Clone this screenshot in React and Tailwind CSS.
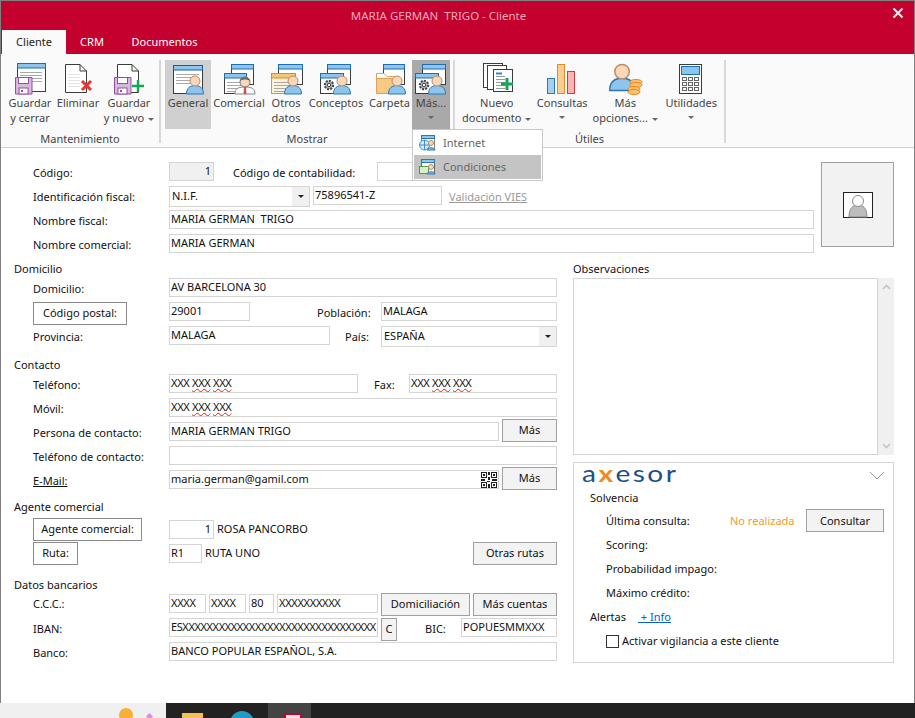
import React from "react";

const Caret = ({ className = "" }) => (
  <span className={"inline-block w-0 h-0 border-l-[3px] border-r-[3px] border-t-[3px] border-l-transparent border-r-transparent border-t-[#666] align-middle " + className} />
);

const Win = ({ x, y, w, h, head = "#8fc4ec", stroke = "#1f6fb0", body = "#fff", frame = "#3c3c3c", lines = true }) => (
  <g>
    <rect x={x + 0.5} y={y + 0.5} width={w} height={h} fill={body} stroke={frame} />
    <rect x={x + 0.5} y={y + 0.5} width={w} height={4.5} fill={head} stroke={stroke} />
    {lines && [9, 12, 15, 18].map((d) => (
      <line key={d} x1={x + 3} x2={x + w - 3} y1={y + d + 0.5} y2={y + d + 0.5} stroke="#a8a8a8" />
    ))}
  </g>
);

const Person = ({ x, y, s = 1 }) => (
  <g transform={`translate(${x} ${y}) scale(${s})`}>
    <path d="M0.5 19 C0.5 13 4 10.5 9 10.5 C14 10.5 17.5 13 17.5 19 Z" fill="#8fc4ec" stroke="#2a78b8" />
    <circle cx="9" cy="6" r="5" fill="#fbd7ba" stroke="#c08a62" />
  </g>
);

const Floppy = ({ x, y }) => (
  <g transform={`translate(${x} ${y})`}>
    <path d="M0.5 0.5 H17 V17 H0.5 Z" fill="#d9b8de" stroke="#92509f" />
    <rect x="3.5" y="0.5" width="10" height="6" fill="#fff" stroke="#92509f" />
    <rect x="4" y="11" width="9" height="6" fill="#fff" stroke="#92509f" />
    <rect x="6" y="13" width="2" height="2" fill="#92509f" />
  </g>
);

const Page = ({ x, y, w = 22, h = 29 }) => (
  <path d={`M${x + 0.5} ${y + 0.5} H${x + w - 7} L${x + w - 0.5} ${y + 7} V${y + h - 0.5} H${x + 0.5} Z M${x + w - 7} ${y + 0.5} V${y + 7} H${x + w - 0.5}`} fill="#fff" stroke="#3c3c3c" />
);

const Gear = ({ x, y }) => (
  <g transform={`translate(${x} ${y})`}>
    <circle cx="6" cy="6" r="4.2" fill="#b5b5b5" stroke="#444" strokeWidth="2" strokeDasharray="2 1.2" />
    <circle cx="6" cy="6" r="1.7" fill="#fff" stroke="#444" />
  </g>
);

const Svg = ({ children }) => (
  <svg width="36" height="35" viewBox="0 0 36 35" className="block shrink-0">{children}</svg>
);

const icons = {
  saveClose: (
    <Svg>
      <Win x={5} y={3} w={28} h={28} />
      <Floppy x={3} y={17} />
    </Svg>
  ),
  del: (
    <Svg>
      <Page x={5} y={4} />
      {[14, 17, 20, 23, 26].map((y) => (
        <line key={y} x1="8" x2="20" y1={y + 0.5} y2={y + 0.5} stroke="#e2e2e2" />
      ))}
      <path d="M22 21 L31 30 M31 21 L22 30" stroke="#e8352f" strokeWidth="3" />
    </Svg>
  ),
  saveNew: (
    <Svg>
      <Page x={6} y={4} />
      <Floppy x={3} y={17} />
      <path d="M27 20 V32 M21 26 H33" stroke="#14a651" strokeWidth="2.4" />
    </Svg>
  ),
  general: (
    <Svg>
      <Win x={3} y={5} w={29} h={28} stroke="#1b5f9e" />
      <Person x={16} y={15} />
    </Svg>
  ),
  comercial: (
    <Svg>
      <Win x={10} y={4} w={22} h={20} lines={false} />
      <Win x={3} y={13} w={22} h={20} />
      <path d="M14 34 C14 28 18 27 24 27 C30 27 34 28 34 34 Z" fill="#fff" stroke="#888" />
      <path d="M23 27 H25 L25.5 34 H22.5 Z" fill="#e24a4a" />
      <circle cx="24" cy="22" r="5" fill="#fbd7ba" stroke="#777" />
      <path d="M19 21 C19 16 29 16 29 21 C26 19 22 19 19 21 Z" fill="#666" />
    </Svg>
  ),
  otros: (
    <Svg>
      <Win x={10} y={4} w={24} h={20} lines={false} />
      <Win x={3} y={13} w={24} h={20} head="#f5c77e" stroke="#d98a2b" body="#fdf3dd" frame="#c99a55" />
      <Person x={16} y={15} />
    </Svg>
  ),
  conceptos: (
    <Svg>
      <Win x={9} y={4} w={23} h={20} lines={false} />
      <Win x={2} y={13} w={23} h={20} lines={false} />
      <Gear x={5} y={19} />
      <Person x={15} y={15} />
    </Svg>
  ),
  carpeta: (
    <Svg>
      <Win x={11} y={4} w={21} h={20} lines={false} />
      <path d="M4.5 13.5 H12 L15 16.5 H24 V32.5 H4.5 Z" fill="#fff" stroke="#e0a05a" />
      <path d="M4.5 18.5 H27 V33.5 H4.5 Z" fill="#f7c983" stroke="#e0a05a" />
      <Person x={16} y={15} />
    </Svg>
  ),
  nuevo: (
    <Svg>
      <rect x="4.5" y="3.5" width="19" height="24" fill="#fff" stroke="#3c3c3c" />
      <rect x="8.5" y="5.5" width="19" height="24" fill="#fff" stroke="#3c3c3c" />
      <rect x="14.5" y="9.5" width="19" height="22" fill="#fff" stroke="#3c3c3c" />
      <path d="M17 13.5 H23" stroke="#2a88cf" strokeWidth="2" />
      {[16, 19, 22, 25, 28].map((y) => (
        <line key={y} x1="17" x2="26" y1={y + 0.5} y2={y + 0.5} stroke="#9a9a9a" />
      ))}
      <path d="M28 18 V30 M22 24 H34" stroke="#14a651" strokeWidth="3" />
    </Svg>
  ),
  consultas: (
    <Svg>
      <rect x="3.5" y="18.5" width="7" height="15" fill="#a4d0f0" stroke="#2a78b8" />
      <rect x="13.5" y="4.5" width="7" height="29" fill="#f8cf8e" stroke="#e58a2b" />
      <rect x="23.5" y="11.5" width="7" height="22" fill="#f4b6b6" stroke="#d6393f" />
    </Svg>
  ),
  opciones: (
    <Svg>
      <Person x={2} y={3} s={1.45} />
      <g fill="#f9c06a" stroke="#e58a2b">
        <ellipse cx="29" cy="22" rx="6" ry="2.6" />
        <ellipse cx="29" cy="25" rx="6" ry="2.6" />
        <ellipse cx="27" cy="29" rx="6" ry="2.6" />
        <ellipse cx="27" cy="32" rx="6" ry="2.6" />
      </g>
    </Svg>
  ),
  util: (
    <Svg>
      <rect x="6.5" y="4.5" width="22" height="29" fill="#fff" stroke="#3c3c3c" />
      <rect x="8.5" y="6.5" width="18" height="8" fill="#8fc4ec" stroke="#1b6fb4" />
      {[17.5, 22.5, 27.5].map((y) =>
        [9.5, 15.5, 21.5].map((x) => (
          <rect key={x + "-" + y} x={x} y={y} width="4" height="3" fill="#fff" stroke="#666" />
        ))
      )}
    </Svg>
  ),
};
icons.mas = icons.conceptos;

const RibbonBtn = ({ w, icon, l1, l2, caret, caretAlone, bg = "" }) => (
  <div className={`flex flex-col items-center h-[69px] text-[11px] leading-[15px] text-[#444] ${w} ${bg}`}>
    {icons[icon]}
    <span className="whitespace-nowrap">{l1}</span>
    {l2 && (
      <span className="whitespace-nowrap">
        {l2}
        {caret && <Caret className="ml-[4px]" />}
      </span>
    )}
    {caretAlone && <Caret className="mt-[6px]" />}
  </div>
);

const RibbonGroup = ({ label, w, children, pl = "" }) => (
  <div className={`flex flex-col h-full shrink-0 border-r-2 border-[#d8d8d8] ${w}`}>
    <div className={`flex ${pl}`}>{children}</div>
    <div className="text-center text-[11px] leading-[15px] text-[#444] mt-[2px]">{label}</div>
  </div>
);

const Field = ({ w, children, right, gray, extra = "", ml = "" }) => (
  <div className={`h-[19px] mt-[2px] border border-[#d5d5d5] pl-[1px] pr-[2px] text-[11px] leading-[15px] text-[#111] whitespace-nowrap overflow-hidden shrink-0 ${right ? "text-right" : ""} ${gray ? "bg-[#f0f0f0]" : "bg-white"} ${w} ${ml} ${extra}`}>
    {children}
  </div>
);

const Select = ({ w, value, ml = "" }) => (
  <div className={`h-[21px] mt-[2px] border border-[#d5d5d5] flex items-center justify-between text-[11px] text-[#111] shrink-0 ${w} ${ml}`}>
    <span className="pl-[2px]">{value}</span>
    <span className="w-[17px] h-full bg-[#f0f0f0] flex items-center justify-center">
      <span className="w-0 h-0 border-l-[3px] border-r-[3px] border-t-[3px] border-l-transparent border-r-transparent border-t-[#222]" />
    </span>
  </div>
);

const Btn = ({ w, children, ml = "", mt = "mt-[-1px]", plain }) => (
  <div className={`h-[23px] border flex items-center justify-center text-[11px] text-[#111] whitespace-nowrap shrink-0 ${plain ? "bg-white border-[#8a8a8a]" : "bg-[#f3f3f3] border-[#a0a0a0]"} ${w} ${ml} ${mt}`}>
    {children}
  </div>
);

const Lbl = ({ w = "w-[136px]", ml = "ml-[19px]", children, cls = "text-[#111]", pt = "pt-[5px]" }) => (
  <div className={`h-[24px] text-[11px] leading-[16px] whitespace-nowrap shrink-0 ${pt} ${w} ${ml} ${cls}`}>{children}</div>
);

const Row = ({ children }) => <div className="flex items-start h-[24px]">{children}</div>;

const Header = ({ h, pt, children }) => (
  <div className={`text-[11px] leading-[16px] text-[#111] ${h} ${pt}`}>{children}</div>
);

const Squiggle = ({ children }) => (
  <span className="underline decoration-wavy decoration-[#e02020] decoration-1 underline-offset-1">{children}</span>
);

const Phone = () => (
  <span className="tracking-[-0.3px]">
    XXX <Squiggle>XXX</Squiggle> <Squiggle>XXX</Squiggle>
  </span>
);

const Qr = () => (
  <svg width="16" height="16" viewBox="0 0 16 16" className="absolute right-[1px] top-[1px]">
    <g fill="none" stroke="#222" strokeWidth="1">
      <rect x="0.5" y="0.5" width="5" height="5" />
      <rect x="10.5" y="0.5" width="5" height="5" />
      <rect x="0.5" y="10.5" width="5" height="5" />
      <rect x="10.5" y="10.5" width="5" height="5" />
    </g>
    <path d="M2 2h2v2H2z M12 2h2v2h-2z M2 12h2v2H2z M12 12h2v2h-2z M7 0h2v3H7z M7 5h2v3H7z M0 7h4v2H0z M6 9h3v1H6z M11 7h5v2h-5z M7 12h2v4H7z" fill="#222" />
  </svg>
);

export default function App() {
  return (
    <div className="w-[915px] h-[718px] relative overflow-hidden flex flex-col bg-white font-['Noto_Sans',sans-serif]">
      <div className="flex-1 flex flex-col border-x border-t border-[#808080] min-h-0">
        {/* Title bar */}
        <div className="h-[53px] bg-[#c4002f] relative shrink-0">
          <div className="text-center text-[11.5px] text-[#eba9b9] pt-[7px] pr-[38px] leading-[16px]">MARIA GERMAN&nbsp; TRIGO - Cliente</div>
          <svg width="12" height="12" viewBox="0 0 12 12" className="absolute right-[10px] top-[6px]">
            <path d="M1.5 1.5 L10.5 10.5 M10.5 1.5 L1.5 10.5" stroke="#f2f2f2" strokeWidth="2" />
          </svg>
          <div className="absolute left-[1px] bottom-0 flex h-[24px] text-[11px] leading-[24px] text-white">
            <div className="w-[64px] bg-[#fafafa] text-[#222] text-center">Cliente</div>
            <div className="w-[52px] text-center">CRM</div>
            <div className="ml-[6px] w-[81px] text-center">Documentos</div>
          </div>
        </div>

        {/* Ribbon */}
        <div className="h-[94px] shrink-0 bg-[#fafafa] border-b border-[#d0d0d0] flex items-stretch pt-[6px] pb-[4px]">
          <RibbonGroup label="Mantenimiento" w="w-[160px]" pl="pl-[5px]">
            <RibbonBtn w="w-[48px]" icon="saveClose" l1="Guardar" l2="y cerrar" />
            <RibbonBtn w="w-[48px]" icon="del" l1="Eliminar" />
            <RibbonBtn w="w-[54px]" icon="saveNew" l1="Guardar" l2="y nuevo" caret />
          </RibbonGroup>
          <RibbonGroup label="Mostrar" w="w-[294px]" pl="pl-[4px]">
            <RibbonBtn w="w-[46px]" icon="general" l1="General" bg="bg-[#d0d0d0]" />
            <RibbonBtn w="w-[56px]" icon="comercial" l1="Comercial" />
            <RibbonBtn w="w-[38px]" icon="otros" l1="Otros" l2="datos" />
            <RibbonBtn w="w-[62px]" icon="conceptos" l1="Conceptos" />
            <RibbonBtn w="w-[45px]" icon="carpeta" l1="Carpeta" />
            <RibbonBtn w="w-[38px]" icon="mas" l1="Más..." caretAlone bg="bg-[#a9a9a9]" />
          </RibbonGroup>
          <RibbonGroup label="Útiles" w="w-[271px]" pl="pl-[6px]">
            <RibbonBtn w="w-[72px]" icon="nuevo" l1="Nuevo" l2="documento" caret />
            <RibbonBtn w="w-[60px]" icon="consultas" l1="Consultas" caretAlone />
            <RibbonBtn w="w-[67px]" icon="opciones" l1="Más" l2="opciones..." caret />
            <RibbonBtn w="w-[66px]" icon="util" l1="Utilidades" caretAlone />
          </RibbonGroup>
        </div>

        {/* Form */}
        <div className="flex-1 bg-white pl-[13px] pt-[12px] min-h-0">
          <div className="flex">
            <div className="w-[800px] shrink-0">
              <Row>
                <Lbl>Código:</Lbl>
                <Field w="w-[45px]" right gray>1</Field>
                <Lbl w="w-[144px]">Código de contabilidad:</Lbl>
                <Field w="w-[65px]"> </Field>
              </Row>
              <Row>
                <Lbl>Identificación fiscal:</Lbl>
                <Select w="w-[141px]" value="N.I.F." />
                <Field w="w-[129px]" ml="ml-[3px]">75896541-Z</Field>
                <Lbl w="w-[80px]" ml="ml-[7px]" cls="text-[#9a9a9a] underline">Validación VIES</Lbl>
              </Row>
              <Row>
                <Lbl>Nombre fiscal:</Lbl>
                <Field w="w-[645px]">MARIA GERMAN&nbsp; TRIGO</Field>
              </Row>
              <Row>
                <Lbl>Nombre comercial:</Lbl>
                <Field w="w-[645px]">MARIA GERMAN</Field>
              </Row>
            </div>
            <div className="ml-[7px] mt-[2px] w-[73px] h-[85px] bg-[#f2f2f2] border border-[#a0a0a0] flex items-center justify-center">
              <svg width="30" height="26" viewBox="0 0 30 26">
                <rect x="0.5" y="0.5" width="29" height="25" fill="#fff" stroke="#222" />
                <path d="M6 25 C6 16 10 13 15 13 C20 13 24 16 24 25 Z" fill="#bdbdbd" stroke="#8a8a8a" />
                <circle cx="15" cy="9" r="5.5" fill="#fff" stroke="#8a8a8a" />
              </svg>
            </div>
          </div>

          <div className="flex">
            <div className="w-[544px] shrink-0">
              <Header h="h-[20px]" pt="pt-[5px]">Domicilio</Header>
              <Row>
                <Lbl>Domicilio:</Lbl>
                <Field w="w-[388px]">AV BARCELONA 30</Field>
              </Row>
              <Row>
                <div className="ml-[19px] w-[136px] shrink-0">
                  <Btn w="w-[94px]" mt="mt-[2px]" plain>Código postal:</Btn>
                </div>
                <Field w="w-[81px]">29001</Field>
                <Lbl w="w-[64px]" ml="ml-[67px]">Población:</Lbl>
                <Field w="w-[176px]">MALAGA</Field>
              </Row>
              <Row>
                <Lbl>Provincia:</Lbl>
                <Field w="w-[161px]">MALAGA</Field>
                <Lbl w="w-[36px]" ml="ml-[15px]">País:</Lbl>
                <Select w="w-[176px]" value="ESPAÑA" />
              </Row>

              <Header h="h-[24px]" pt="pt-[9px]">Contacto</Header>
              <Row>
                <Lbl>Teléfono:</Lbl>
                <Field w="w-[189px]"><Phone /></Field>
                <Lbl w="w-[35px]" ml="ml-[16px]">Fax:</Lbl>
                <Field w="w-[148px]"><Phone /></Field>
              </Row>
              <Row>
                <Lbl>Móvil:</Lbl>
                <Field w="w-[388px]"><Phone /></Field>
              </Row>
              <Row>
                <Lbl>Persona de contacto:</Lbl>
                <Field w="w-[330px]">MARIA GERMAN TRIGO</Field>
                <Btn w="w-[55px]" ml="ml-[3px]">Más</Btn>
              </Row>
              <Row>
                <Lbl>Teléfono de contacto:</Lbl>
                <Field w="w-[388px]"> </Field>
              </Row>
              <Row>
                <Lbl cls="text-[#111] underline">E-Mail:</Lbl>
                <Field w="w-[330px]" extra="relative">maria.german@gamil.com<Qr /></Field>
                <Btn w="w-[55px]" ml="ml-[3px]">Más</Btn>
              </Row>

              <Header h="h-[26px]" pt="pt-[7px]">Agente comercial</Header>
              <Row>
                <div className="ml-[19px] w-[136px] shrink-0">
                  <Btn w="w-[109px]" mt="mt-0" plain>Agente comercial:</Btn>
                </div>
                <Field w="w-[45px]" right>1</Field>
                <Lbl w="w-[120px]" ml="ml-[3px]" pt="pt-[3px]">ROSA PANCORBO</Lbl>
              </Row>
              <Row>
                <div className="ml-[19px] w-[136px] shrink-0">
                  <Btn w="w-[45px]" mt="mt-0" plain>Ruta:</Btn>
                </div>
                <Field w="w-[33px]">R1</Field>
                <Lbl w="w-[268px]" ml="ml-[3px]" pt="pt-[3px]">RUTA UNO</Lbl>
                <Btn w="w-[84px]" mt="mt-0">Otras rutas</Btn>
              </Row>

              <Header h="h-[26px]" pt="pt-[11px]">Datos bancarios</Header>
              <Row>
                <Lbl pt="pt-[4px]">C.C.C.:</Lbl>
                <Field w="w-[37px]"><span className="tracking-[-0.3px]">XXXX</span></Field>
                <Field w="w-[37px]" ml="ml-[3px]"><span className="tracking-[-0.3px]">XXXX</span></Field>
                <Field w="w-[25px]" ml="ml-[3px]">80</Field>
                <Field w="w-[101px]" ml="ml-[3px]"><span className="tracking-[-0.3px]">XXXXXXXXXX</span></Field>
                <Btn w="w-[89px]" ml="ml-[3px]" mt="mt-[1px]">Domiciliación</Btn>
                <Btn w="w-[84px]" ml="ml-[3px]" mt="mt-[1px]">Más cuentas</Btn>
              </Row>
              <Row>
                <Lbl>IBAN:</Lbl>
                <Field w="w-[209px]"><span className="tracking-[-0.4px]">ESXXXXXXXXXXXXXXXXXXXXXXXXXXXXXXXX</span></Field>
                <Btn w="w-[16px]" ml="ml-[3px]" mt="mt-[2px]">C</Btn>
                <Lbl w="w-[36px]" ml="ml-[28px]">BIC:</Lbl>
                <Field w="w-[96px]">POPUESMMXXX</Field>
              </Row>
              <Row>
                <Lbl>Banco:</Lbl>
                <Field w="w-[388px]">BANCO POPULAR ESPAÑOL, S.A.</Field>
              </Row>
            </div>

            {/* Right column */}
            <div className="ml-[15px] w-[321px] shrink-0">
              <Header h="h-[22px]" pt="pt-[5px]">Observaciones</Header>
              <div className="flex h-[177px]">
                <div className="flex-1 border border-[#d5d5d5] bg-white" />
                <div className="w-[16px] bg-[#f0f0f0] flex flex-col items-center justify-between py-[6px]">
                  <svg width="9" height="6" viewBox="0 0 9 6"><path d="M1 5 L4.5 1.5 L8 5" fill="none" stroke="#c4c4c4" strokeWidth="1.6" /></svg>
                  <svg width="9" height="6" viewBox="0 0 9 6"><path d="M1 1 L4.5 4.5 L8 1" fill="none" stroke="#c4c4c4" strokeWidth="1.6" /></svg>
                </div>
              </div>
              <div className="mt-[7px] h-[201px] border border-[#d5d5d5] relative pl-[16px] pt-[27px] text-[11px] text-[#111]">
                <div className="absolute left-[8px] top-[-3px] h-[26px] leading-[26px] text-[23px] font-['Lato',sans-serif] font-normal tracking-[2px] text-[#1a4f8c] scale-x-[1.22] origin-left">
                  a<span className="text-[#f08a1d] font-bold">x</span>esor
                </div>
                <svg width="16" height="9" viewBox="0 0 16 9" className="absolute right-[8px] top-[8px]">
                  <path d="M1 1 L8 8 L15 1" fill="none" stroke="#9a9a9a" strokeWidth="1" />
                </svg>
                <div className="h-[16px] leading-[16px]">Solvencia</div>
                <div className="pl-[16px]">
                  <div className="flex h-[24px] leading-[24px] mt-[3px]">
                    <span className="w-[124px]">Última consulta:</span>
                    <span className="w-[76px] text-[#ee9a2e]">No realizada</span>
                    <Btn w="w-[78px]" mt="mt-0">Consultar</Btn>
                  </div>
                  <div className="h-[24px] leading-[24px]">Scoring:</div>
                  <div className="h-[24px] leading-[24px]">Probabilidad impago:</div>
                  <div className="h-[24px] leading-[24px]">Máximo crédito:</div>
                </div>
                <div className="flex h-[24px] leading-[24px]">
                  <span className="w-[48px]">Alertas</span>
                  <span className="text-[#0563c1] underline">&nbsp;+ Info</span>
                </div>
                <div className="flex items-center h-[24px] pl-[16px]">
                  <span className="w-[13px] h-[13px] border border-[#333] mr-[3px] shrink-0" />
                  <span>Activar vigilancia a este cliente</span>
                </div>
              </div>
            </div>
          </div>
        </div>
      </div>

      {/* Taskbar */}
      <div className="h-[15px] shrink-0 flex bg-[#222] overflow-hidden">
        <div className="w-[166px] bg-[#f0f0f0] relative overflow-hidden">
          <span className="absolute left-[119px] top-[5px] w-[14px] h-[14px] rounded-full bg-[#f6b03a]" />
          <span className="absolute left-[147px] top-[11px] w-[5px] h-[5px] rotate-45 bg-[#e58ae0]" />
        </div>
        <div className="flex-1 relative">
          <span className="absolute left-[16px] top-[10px] w-[21px] h-[8px] bg-[#f2c14e]" />
          <span className="absolute left-[64px] top-[8px] w-[24px] h-[24px] rounded-full bg-[#1f9bc8]" />
          <span className="absolute left-[102px] top-0 w-[43px] h-[15px] bg-[#444]" />
          <span className="absolute left-[118px] top-[10px] w-[18px] h-[8px] bg-[#e5e5e5] border-t-2 border-x-2 border-[#c4002f]" />
        </div>
      </div>

      {/* Dropdown menu */}
      <div className="absolute left-[412px] top-[129px] w-[131px] h-[52px] bg-white border border-[#c8c8c8] p-[1px] text-[11px] text-[#666]">
        <div className="h-[24px] flex items-center pl-[4px]">
          <svg width="18" height="18" viewBox="0 0 18 18" className="mr-[7px]">
            <rect x="3.5" y="1.5" width="13" height="13" fill="#fff" stroke="#888" />
            <rect x="3.5" y="1.5" width="13" height="3" fill="#8fc4ec" stroke="#2a78b8" />
            <circle cx="6.5" cy="11" r="5" fill="#d5e8f7" stroke="#3d8fd0" />
            <path d="M1.5 11 H11.5 M6.5 6 V16" stroke="#3d8fd0" />
            <circle cx="13" cy="9" r="2.5" fill="#fbd7ba" stroke="#c08a62" />
            <path d="M9 16 C9 13 17 13 17 16 Z" fill="#8fc4ec" stroke="#2a78b8" />
          </svg>
          Internet
        </div>
        <div className="h-[24px] flex items-center pl-[4px] bg-[#c4c4c4]">
          <svg width="18" height="18" viewBox="0 0 18 18" className="mr-[7px]">
            <rect x="3.5" y="1.5" width="13" height="13" fill="#fff" stroke="#666" />
            <rect x="3.5" y="1.5" width="13" height="3" fill="#8fc4ec" stroke="#2a78b8" />
            <rect x="1.5" y="8.5" width="9" height="7" fill="#d7efc8" stroke="#4f9d4a" />
            <circle cx="13" cy="9" r="2.5" fill="#fbd7ba" stroke="#c08a62" />
            <path d="M9 16 C9 13 17 13 17 16 Z" fill="#8fc4ec" stroke="#2a78b8" />
          </svg>
          Condiciones
        </div>
      </div>
    </div>
  );
}
